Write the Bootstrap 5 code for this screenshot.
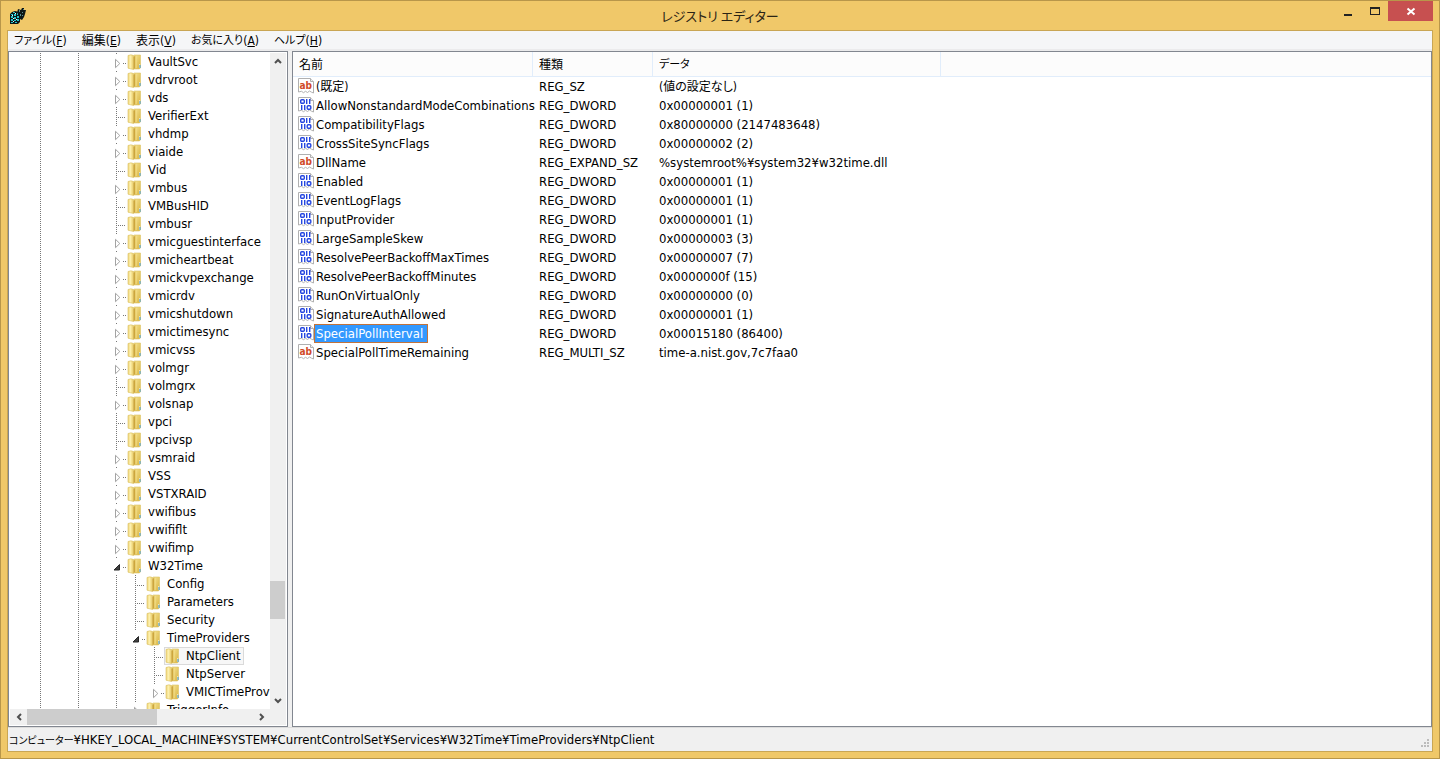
<!DOCTYPE html>
<html lang="ja">
<head>
<meta charset="utf-8">
<meta name="viewport" content="width=device-width, initial-scale=1">
<title>レジストリ エディター</title>
<link href="https://cdn.jsdelivr.net/npm/bootstrap@5.3.0/dist/css/bootstrap.min.css" rel="stylesheet">
<style>
  body {
    font: 13px/18px "DejaVu Sans Condensed", "Noto Sans CJK JP", sans-serif;
    font-feature-settings: "palt";
    color: #000;
  }
  svg { display: block; flex: none; }
  button { border: 0; padding: 0; background: none; color: inherit; font: inherit; font-feature-settings: inherit; }
  .ja { font-size: 12px; }
  .kana { font-size: 11px; }
  .win { background: #f0c869; border: 1px solid #b8964a; padding: 0 6px 6px; }
  .titlebar { height: 29px; padding-top: 2px; }
  .titlebar h1 { font: 13px/20px "Noto Sans CJK JP", sans-serif; font-feature-settings: "palt"; color: #2b2415; }
  .app-icon { left: 2px; top: 6px; }
  .win-btns { right: 0; top: 0; height: 20px; }
  .win-btns button { width: 27px; }
  .win-btns .close-btn { width: 45px; background: #c75050; }
  .client { border: 1px solid #c9a654; background: #f0f0f0; }
  .menus { height: 20px; padding-left: 6px; gap: 15px; background: #f5f6f7; border-bottom: 2px solid #ebebec; font-size: 12px; }
  .menus button { padding-top: 2px; line-height: 18px; display: flex; align-items: center; }
  .panes { gap: 4px; min-height: 0; }
  .pane { background: #fff; border: 1px solid #828790; }
  .tree-pane { width: 280px; padding: 1px; }
  .tree { padding-left: 21px; min-height: 0; }
  .tree li { height: 18px; display: flex; white-space: nowrap; }
  .guide { width: 19px; flex: none; }
  .guide.line {
    background: repeating-linear-gradient(#777 0 1px, transparent 1px 2px) 9px 0 / 1px 18px no-repeat;
  }
  .guide.branch {
    background:
      repeating-linear-gradient(#777 0 1px, transparent 1px 2px) 9px 0 / 1px 18px no-repeat,
      repeating-linear-gradient(90deg, #777 0 1px, transparent 1px 2px) 11px 10px / 8px 1px no-repeat;
  }
  .node { display: flex; align-items: center; gap: 5px; border: 1px solid transparent; padding-right: 2px; line-height: 16px; }
  .node.picked { background: #f7f7f7; border-color: #dadada; }
  .bar { background: #f0f0f0; }
  .vbar { width: 16px; }
  .hbar { height: 16px; }
  .bar button { flex: none; width: 16px; height: 16px; display: grid; place-items: center; }
  .hbar button { width: 17px; }
  .thumb { background: #cdcdcd; }
  .vbar .thumb { width: 15px; height: 38px; }
  .hbar .thumb { width: 130px; }
  .above { flex: 512 0 0; }
  .below { flex: 74 0 0; }
  .values { table-layout: fixed; width: 100%; border-collapse: separate; border-spacing: 0; }
  .values th { height: 25px; padding: 2px 6px 0; font-weight: 400; background: #fcfcfc; border-right: 1px solid #e1edfb; border-bottom: 1px solid #e1edfb; }
  .values th:last-child { border-right: 0; }
  .values td { height: 19px; padding: 0 6px; line-height: 19px; white-space: nowrap; }
  .values td:first-child { padding: 0 0 0 5px; }
  .values td.ja { padding-top: 1px; line-height: 18px; }
  .value-name { border: 1px solid transparent; padding: 0 4px 0 1px; line-height: 17px; height: 19px; }
  .value-name.ja { padding-top: 1px; }
  .value-name.picked { background: #39f; color: #fff; border-color: #c2733a; }
  .statusbar { height: 24px; padding: 1px 1px 0; line-height: 22px; border-top: 1px solid #dcdcdc; }
  .statusbar .lead-in { font-size: 10px; }
</style>
</head>
<body>
<svg width="0" height="0" class="position-absolute" aria-hidden="true">
  <defs>
    <linearGradient id="gold" x1="0" x2="1"><stop offset="0" stop-color="#efd77c"/><stop offset=".45" stop-color="#fdf0ad"/><stop offset="1" stop-color="#e8ca64"/></linearGradient>
    <linearGradient id="gold2" x1="0" x2="1" y1="0" y2="1"><stop offset="0" stop-color="#f6e594"/><stop offset="1" stop-color="#d8b340"/></linearGradient>
  </defs>
  <symbol id="folder" viewBox="0 0 16 16">
    <path d="M7 1h6.500v12.500l-1 1.500H7z" fill="url(#gold2)" stroke="#dcc264" stroke-width=".6"/>
    <path d="M1 1.500Q4 .2 6.500 1.500V15.500L1 14.200z" fill="url(#gold)" stroke="#d9be5e" stroke-width=".6"/>
    <path d="M6.500 3l2-1.500v12L6.500 15.500z" fill="#cda63c"/>
    <path d="M9 2v12" stroke="#f5e08a"/>
    <path d="M12.500 10v4" stroke="#f8fbff" stroke-width=".6"/><path d="M13 11v3" stroke="#3b9bdc"/>
  </symbol>
  <symbol id="closed" viewBox="0 0 19 18"><path d="M9.500 0v1" stroke="#777"/><path d="M8.500 6.300v8.400l4.300-4.200z" fill="#fff" stroke="#a3a3a3"/><path d="M16 10.500h1M18 10.500h1" stroke="#777"/></symbol>
  <symbol id="open" viewBox="0 0 19 18"><path d="M9.500 0v1" stroke="#777"/><path d="M12.500 7.500v5.500h-5.500z" fill="#404040" stroke="#262626"/><path d="M16 10.500h1M18 10.500h1" stroke="#777"/></symbol>
  <symbol id="page" viewBox="0 0 16 16"><path d="M.5 .5h12l3 3v11.500l-2-.8-2-1.200-2 1.500-2-1.200-2 1.400-2-1.400-3 .7z" fill="#fff" stroke="#b0b0b0"/><path d="M12.500 .5v3h3" fill="#eee" stroke="#b0b0b0"/></symbol>
  <symbol id="str" viewBox="0 0 16 16"><use href="#page"/><text x="1.500" y="10.500" font-family="DejaVu Sans Condensed" font-weight="700" font-size="10" fill="#d04a28">ab</text></symbol>
  <symbol id="bin" viewBox="0 0 16 16"><use href="#page"/><g fill="none" stroke="#2446e0" stroke-width="1.400"><rect x="2.700" y="2.700" width="3.600" height="3.600" rx="1"/><path d="M8.700 2v5M11.700 2v5M3.700 8v5M6.700 8v5"/><rect x="9.200" y="8.700" width="3.600" height="3.600" rx="1"/></g></symbol>
</svg>

<div class="win vh-100 d-flex flex-column">
  <header class="titlebar position-relative d-flex align-items-center justify-content-center">
    <svg class="app-icon position-absolute" width="18" height="18" viewBox="0 0 18 18" aria-hidden="true">
      <path d="M1 7l2-2 3-1 4 1 1 1v9l-2 2H1z" fill="#0a1618"/>
      <path d="M2 7h2v1H2zM4 5h2v1H4zM5 7h2v2H5zM8 6h1v2H8zM2 9h2v2H2zM5 10h2v2H5zM8 9h2v2H8zM2 12h2v2H2zM5 13h2v1H5zM8 12h2v2H8zM2 15h2v1H2zM6 15h2v1H6z" fill="#27c4cc"/>
      <path d="M3 8h1v1H3zM6 6h1v1H6zM7 12h1v1H7zM4 11h1v1H4zM4 14h1v1H4z" fill="#e8ffff"/>
      <path d="M8 6l1-4 3 1 1-2h2v2l2 0-1 4-1 3-2 3-2-1V8z" fill="#0c1718"/>
      <path d="M10 3h1v2h-1zM14 2h1v1h-1zM13 5h1v1h-1zM11 7h1v2h-1zM13 8h1v1h-1z" fill="#5b8f94"/>
    </svg>
    <h1 class="m-0">レジストリ エディター</h1>
    <div class="win-btns position-absolute d-flex">
      <button type="button" aria-label="最小化"><svg width="27" height="20"><path d="M10 14h8" stroke="#222" stroke-width="2"/></svg></button>
      <button type="button" aria-label="最大化"><svg width="27" height="20"><path d="M9 6h10v8H9z M10 8v5h8V8z" fill="#222" fill-rule="evenodd"/></svg></button>
      <button type="button" class="close-btn" aria-label="閉じる"><svg width="45" height="20"><path d="M19.500 7.500l7 6M26.500 7.500l-7 6" stroke="#fff" stroke-width="2"/></svg></button>
    </div>
  </header>

  <main class="client flex-fill d-flex flex-column overflow-hidden">
    <nav class="menus d-flex flex-shrink-0">
      <button type="button"><span class="kana">ファイル</span>(<u>F</u>)</button>
      <button type="button"><span class="ja">編集</span>(<u>E</u>)</button>
      <button type="button"><span class="ja">表示</span>(<u>V</u>)</button>
      <button type="button"><span class="kana">お気に入り</span>(<u>A</u>)</button>
      <button type="button"><span class="kana">ヘルプ</span>(<u>H</u>)</button>
    </nav>

    <div class="panes flex-fill d-flex">
      <section class="pane tree-pane flex-shrink-0 d-flex flex-column">
        <div class="d-flex flex-fill overflow-hidden">
          <ul class="tree list-unstyled m-0 flex-fill overflow-hidden" id="tree"></ul>
          <div class="bar vbar d-flex flex-column flex-shrink-0">
            <button type="button" aria-label="上へ"><svg width="8" height="6"><path d="M1 5l3-3 3 3" fill="none" stroke="#505050" stroke-width="2"/></svg></button>
            <div class="above"></div><div class="thumb"></div><div class="below"></div>
            <button type="button" aria-label="下へ"><svg width="8" height="6"><path d="M1 1l3 3 3-3" fill="none" stroke="#505050" stroke-width="2"/></svg></button>
          </div>
        </div>
        <div class="bar hbar d-flex flex-shrink-0 pe-3">
          <button type="button" aria-label="左へ"><svg width="6" height="8"><path d="M5 1l-3 3 3 3" fill="none" stroke="#505050" stroke-width="2"/></svg></button>
          <div class="thumb"></div><div class="flex-fill"></div>
          <button type="button" aria-label="右へ"><svg width="6" height="8"><path d="M1 1l3 3-3 3" fill="none" stroke="#505050" stroke-width="2"/></svg></button>
        </div>
      </section>

      <section class="pane flex-fill overflow-hidden">
        <table class="values">
          <colgroup><col style="width:240px"><col style="width:120px"><col style="width:288px"><col></colgroup>
          <thead><tr><th class="ja">名前</th><th class="ja">種類</th><th class="kana">データ</th><th></th></tr></thead>
          <tbody id="values"></tbody>
        </table>
      </section>
    </div>

    <footer class="statusbar d-flex justify-content-between flex-shrink-0">
      <div><span class="lead-in">コンピューター</span>¥HKEY_LOCAL_MACHINE¥SYSTEM¥CurrentControlSet¥Services¥W32Time¥TimeProviders¥NtpClient</div>
      <svg class="align-self-end mb-1" width="10" height="8" aria-hidden="true"><path d="M6 0h2v2H6zM3 3h2v2H3zM6 3h2v2H6zM0 6h2v2H0zM3 6h2v2H3zM6 6h2v2H6z" fill="#bcbcbc"/></svg>
    </footer>
  </main>
</div>

<script>
  // "+" has collapsed children, "*" is expanded, ">" deepens the level by one.
  const keys = `+VaultSvc +vdrvroot +vds VerifierExt +vhdmp +viaide Vid +vmbus VMBusHID vmbusr
    +vmicguestinterface +vmicheartbeat +vmickvpexchange +vmicrdv +vmicshutdown +vmictimesync +vmicvss
    +volmgr volmgrx +volsnap vpci vpcivsp +vsmraid +VSS +VSTXRAID +vwifibus +vwififlt +vwifimp *W32Time
    >Config >Parameters >Security >*TimeProviders >>NtpClient >>NtpServer >>+VMICTimeProvider >+TriggerInfo`.split(/\s+/);
  const icon = (id, w, h) => `<svg width="${w}" height="${h}" aria-hidden="true"><use href="#${id}"/></svg>`;
  document.getElementById('tree').innerHTML = keys.map(k => {
    const [, deep, mark, name] = k.match(/^(>*)([+*]?)(.*)$/);
    const guides = ['line', '', 'line', '', ...Array(deep.length).fill('line')]
      .map((c, i) => `<span class="guide ${c}"></span>`).join('');
    const joint = mark ? icon(mark === '+' ? 'closed' : 'open', 19, 18) : '<span class="guide branch"></span>';
    return `<li>${guides}${joint}<span class="node ${name === 'NtpClient' ? 'picked' : ''}">${icon('folder', 16, 16)}<span>${name}</span></span></li>`;
  }).join('');

  const rows = [
    ['(既定)', 'SZ', '(値の設定なし)'],
    ['AllowNonstandardModeCombinations', 'DWORD', '0x00000001 (1)'],
    ['CompatibilityFlags', 'DWORD', '0x80000000 (2147483648)'],
    ['CrossSiteSyncFlags', 'DWORD', '0x00000002 (2)'],
    ['DllName', 'EXPAND_SZ', '%systemroot%¥system32¥w32time.dll'],
    ['Enabled', 'DWORD', '0x00000001 (1)'],
    ['EventLogFlags', 'DWORD', '0x00000001 (1)'],
    ['InputProvider', 'DWORD', '0x00000001 (1)'],
    ['LargeSampleSkew', 'DWORD', '0x00000003 (3)'],
    ['ResolvePeerBackoffMaxTimes', 'DWORD', '0x00000007 (7)'],
    ['ResolvePeerBackoffMinutes', 'DWORD', '0x0000000f (15)'],
    ['RunOnVirtualOnly', 'DWORD', '0x00000000 (0)'],
    ['SignatureAuthAllowed', 'DWORD', '0x00000001 (1)'],
    ['SpecialPollInterval', 'DWORD', '0x00015180 (86400)'],
    ['SpecialPollTimeRemaining', 'MULTI_SZ', 'time-a.nist.gov,7c7faa0']
  ];
  document.getElementById('values').innerHTML = rows.map(([n, t, d], i) => `<tr>
    <td><div class="d-flex align-items-center">${icon(t === 'DWORD' ? 'bin' : 'str', 16, 16)}<span class="value-name ${n === 'SpecialPollInterval' ? 'picked' : ''} ${i ? '' : 'ja'}">${n}</span></div></td>
    <td>REG_${t}</td><td${i ? '' : ' class="ja"'}>${d}</td><td></td></tr>`).join('');
</script>
<script src="https://cdn.jsdelivr.net/npm/bootstrap@5.3.0/dist/js/bootstrap.bundle.min.js"></script>
</body>
</html>
